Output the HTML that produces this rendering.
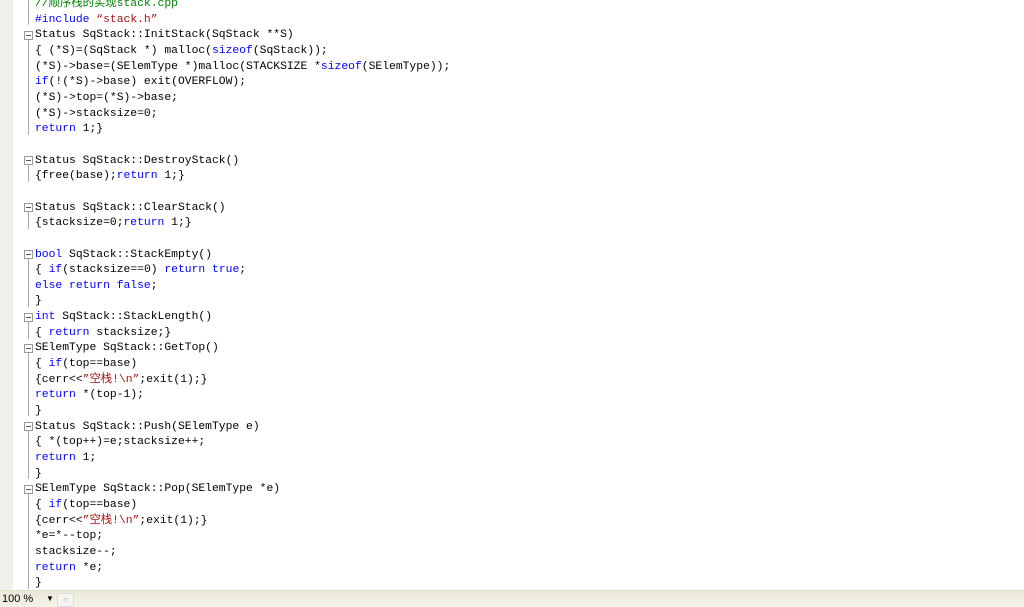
<!DOCTYPE html><html><head><style>
body{margin:0;width:1024px;height:606px;overflow:hidden;background:#fff;position:relative;font-family:"Liberation Mono","Noto Sans CJK SC",monospace}
#g{position:absolute;left:0;top:0;width:13px;height:590px;background:#f0f0ec}
#code{position:absolute;left:35px;top:-3px;font-size:11.35px;line-height:15.65px;white-space:pre;color:#000}
.k{color:#0000ff}.c{color:#008000}.s{color:#a31515}
.fb{position:absolute;left:24px;width:7px;height:7px;border:1px solid #999;background:#fff}
.fb:after{content:"";position:absolute;left:1px;top:3px;width:5px;height:1px;background:#555}
.vl{position:absolute;left:28px;width:1px;background:#aaa}
#sb{position:absolute;left:0;top:590px;width:1024px;height:16px;background:linear-gradient(#ece9d8,#f4f2ea);border-top:1px solid #e6e0c8;font-family:"Liberation Sans",sans-serif;font-size:11px;line-height:16px}
</style></head><body>
<div id="g"></div>
<div class="vl" style="top:0;height:25px"></div>
<div class="fb" style="top:31px"></div><div class="vl" style="top:40px;height:95px"></div>
<div class="fb" style="top:156px"></div><div class="vl" style="top:165px;height:17px"></div>
<div class="fb" style="top:203px"></div><div class="vl" style="top:212px;height:17px"></div>
<div class="fb" style="top:250px"></div><div class="vl" style="top:259px;height:48px"></div>
<div class="fb" style="top:313px"></div><div class="vl" style="top:322px;height:17px"></div>
<div class="fb" style="top:344px"></div><div class="vl" style="top:353px;height:63px"></div>
<div class="fb" style="top:422px"></div><div class="vl" style="top:431px;height:48px"></div>
<div class="fb" style="top:485px"></div><div class="vl" style="top:494px;height:95px"></div>
<div id="code"><span class="c">//顺序栈的实现stack.cpp</span>
<span class="k">#include</span> <span class="s">“stack.h”</span>
Status SqStack::InitStack(SqStack **S)
{ (*S)=(SqStack *) malloc(<span class="k">sizeof</span>(SqStack));
(*S)->base=(SElemType *)malloc(STACKSIZE *<span class="k">sizeof</span>(SElemType));
<span class="k">if</span>(!(*S)->base) exit(OVERFLOW);
(*S)->top=(*S)->base;
(*S)->stacksize=0;
<span class="k">return</span> 1;}

Status SqStack::DestroyStack()
{free(base);<span class="k">return</span> 1;}

Status SqStack::ClearStack()
{stacksize=0;<span class="k">return</span> 1;}

<span class="k">bool</span> SqStack::StackEmpty()
{ <span class="k">if</span>(stacksize==0) <span class="k">return true</span>;
<span class="k">else return false</span>;
}
<span class="k">int</span> SqStack::StackLength()
{ <span class="k">return</span> stacksize;}
SElemType SqStack::GetTop()
{ <span class="k">if</span>(top==base)
{cerr&lt;&lt;<span class="s">”空栈!\n”</span>;exit(1);}
<span class="k">return</span> *(top-1);
}
Status SqStack::Push(SElemType e)
{ *(top++)=e;stacksize++;
<span class="k">return</span> 1;
}
SElemType SqStack::Pop(SElemType *e)
{ <span class="k">if</span>(top==base)
{cerr&lt;&lt;<span class="s">”空栈!\n”</span>;exit(1);}
*e=*--top;
stacksize--;
<span class="k">return</span> *e;
}</div>
<div id="sb"><span style="position:absolute;left:2px">100 %</span><span style="position:absolute;left:46px;font-size:8px">▼</span><span style="position:absolute;left:57px;top:2px;width:15px;height:12px;border:1px solid #ddd;background:#f4f4f0;color:#bbb;font-size:9px;line-height:12px;text-align:center">&lt;</span></div>
</body></html>
